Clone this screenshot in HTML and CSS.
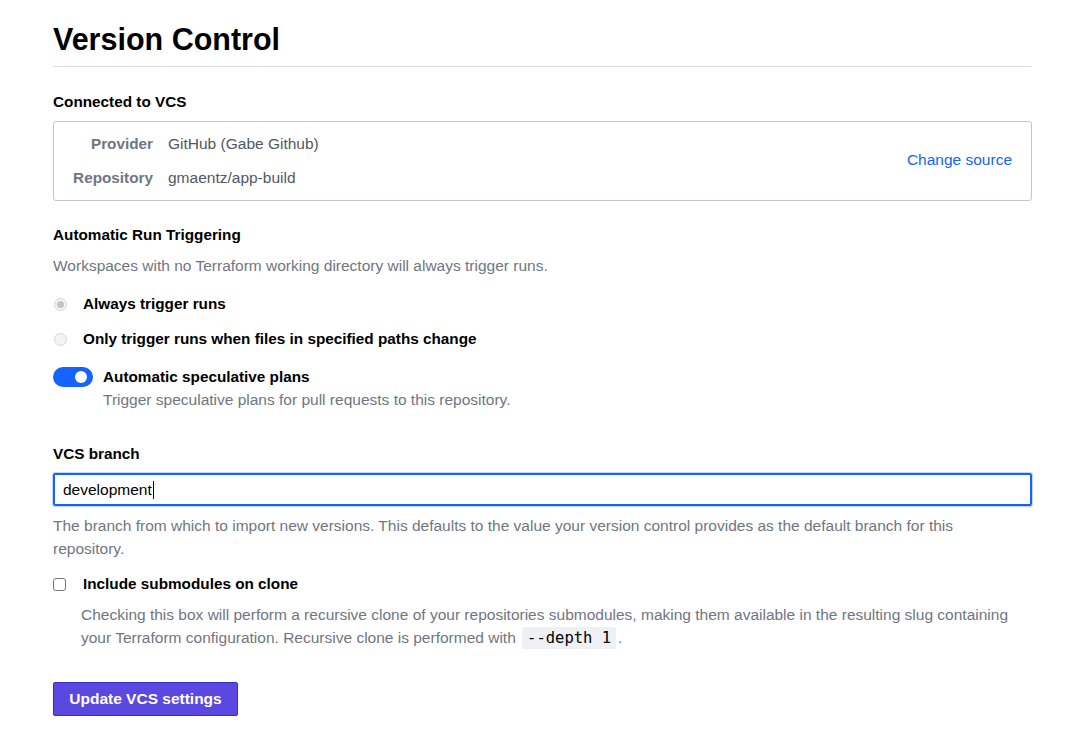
FILE: index.html
```html
<!DOCTYPE html>
<html>
<head>
<meta charset="utf-8">
<link rel="stylesheet" href="styles.css">
</head>
<body>
<main class="page">
  <h1 class="title">Version Control</h1>
  <section class="section first">
    <h2 class="heading">Connected to VCS</h2>
    <div class="vcs-box">
      <dl class="vcs-list">
        <div class="vcs-row"><dt>Provider</dt><dd>GitHub (Gabe Github)</dd></div>
        <div class="vcs-row"><dt>Repository</dt><dd>gmaentz/app-build</dd></div>
      </dl>
      <a class="link" href="#">Change source</a>
    </div>
  </section>

  <section class="section trig">
    <h2 class="heading">Automatic Run Triggering</h2>
    <p class="muted desc">Workspaces with no Terraform working directory will always trigger runs.</p>
    <div class="option radio-opt"><span class="radio checked"></span><span class="opt-label">Always trigger runs</span></div>
    <div class="option radio-opt second"><span class="radio"></span><span class="opt-label">Only trigger runs when files in specified paths change</span></div>
    <div class="toggle-opt">
      <span class="toggle"><span class="knob"></span></span>
      <div class="toggle-text">
        <span class="opt-label">Automatic speculative plans</span>
        <span class="muted">Trigger speculative plans for pull requests to this repository.</span>
      </div>
    </div>
  </section>

  <section class="section branch">
    <h2 class="heading">VCS branch</h2>
    <div class="input"><span>development</span><span class="caret"></span></div>
    <p class="muted help">The branch from which to import new versions. This defaults to the value your version control provides as the default branch for this repository.</p>
    <div class="option check-opt"><span class="checkbox"></span><span class="opt-label">Include submodules on clone</span></div>
    <p class="muted check-desc">Checking this box will perform a recursive clone of your repositories submodules, making them available in the resulting slug containing your Terraform configuration. Recursive clone is performed with <code class="code">--depth 1</code>.</p>
  </section>

  <button class="btn">Update VCS settings</button>
</main>
</body>
</html>
```

FILE: styles.css
```css
* { box-sizing: border-box; }
html, body { margin: 0; padding: 0; background: #fff; }
body {
  font-family: "Liberation Sans", Arial, Helvetica, sans-serif;
  font-size: 15.5px;
  color: #000;
}
.page {
  width: 979px;
  margin-left: 53px;
  padding-top: 21px;
}
.title {
  font-size: 30.5px;
  font-weight: 700;
  margin: 0;
  line-height: 36px;
  padding-bottom: 9px;
  border-bottom: 1px solid #dcdce3;
}
.heading {
  font-size: 15.3px;
  font-weight: 700;
  margin: 0;
  line-height: 20px;
}
.section.first { margin-top: 25px; }
.vcs-box {
  margin-top: 9px;
  border: 1px solid #c2c5cb;
  border-radius: 3px;
  height: 80px;
  display: flex;
  align-items: center;
  justify-content: space-between;
  padding: 0 19px 0 0;
}
.vcs-list { margin: 0; display: flex; flex-direction: column; gap: 14px; }
.vcs-row { display: flex; line-height: 20px; }
.vcs-row dt { width: 99px; text-align: right; font-weight: 700; font-size: 15.3px; color: #6f7682; }
.vcs-row dd { margin: 0 0 0 15px; color: #525761; }
.link { color: #1563ff; text-decoration: none; margin-top: -2px; }
.muted { color: #6f7682; }
.section.trig { margin-top: 24px; }
.desc { margin: 11px 0 0; line-height: 20px; }
.option { display: flex; align-items: center; line-height: 20px; }
.opt-label { font-weight: 700; font-size: 15.3px; color: #000; }
.radio-opt { margin-top: 18px; }
.radio-opt.second { margin-top: 15px; }
.radio {
  width: 13px; height: 13px; border-radius: 50%;
  border: 1px solid #d6d6d6;
  background: #f4f4f4;
  margin: 0 16px 0 1px;
  display: flex; align-items: center; justify-content: center;
  flex: none;
}
.radio.checked::after {
  content: ""; width: 7px; height: 7px; border-radius: 50%; background: #c4c4c4;
}
.toggle-opt { display: flex; margin-top: 18px; align-items: flex-start; }
.toggle {
  width: 40px; height: 20px; border-radius: 10px; background: #1563ff;
  display: flex; align-items: center; justify-content: flex-end;
  padding-right: 6px; margin-top: 0; flex: none;
}
.knob { width: 12px; height: 12px; border-radius: 50%; background: #fff; }
.toggle-text { display: flex; flex-direction: column; margin-left: 10px; line-height: 20px; gap: 3px; }
.section.branch { margin-top: 34px; }
.input {
  margin-top: 9px;
  height: 33px;
  border: 2px solid #1563ff;
  border-radius: 2px;
  box-shadow: 0 0 0 1px #c5d7fb;
  display: flex; align-items: center;
  padding-left: 8px;
  color: #000;
}
.caret { width: 1px; height: 18px; background: #000; margin-left: 1px; }
.help { margin: 8px 0 0; line-height: 23px; padding-right: 20px; }
.check-opt { margin-top: 14px; }
.checkbox {
  width: 13px; height: 13px; border: 1px solid #777; border-radius: 3px;
  margin-right: 17px; flex: none; background: #fff;
}
.check-desc { margin: 9px 0 0 28px; line-height: 23px; }
.code {
  font-family: "DejaVu Sans Mono", "Liberation Mono", monospace;
  font-size: 15.5px;
  background: #eef0f3;
  color: #000;
  padding: 2px 5px;
  margin: 0 2px;
  border-radius: 2px;
}
.btn {
  margin-top: 32px;
  width: 185px; height: 34px;
  background: #5b48e0;
  color: #fff;
  border: 1px solid #3b2bc4;
  border-radius: 2px;
  font-family: "Liberation Sans", Arial, sans-serif;
  font-size: 15.5px; font-weight: 700;
  box-shadow: 0 3px 2px rgba(0,0,0,0.1);
  padding: 0;
}
```
